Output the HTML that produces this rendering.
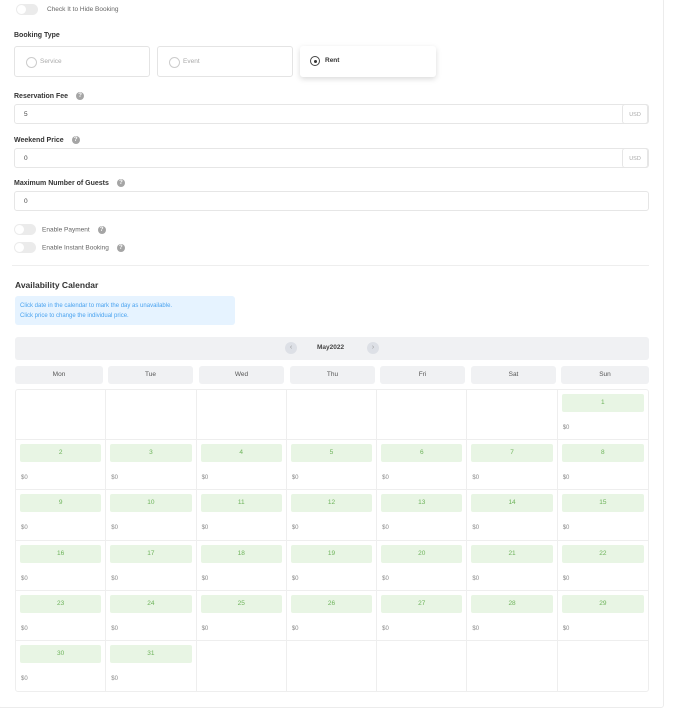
<!DOCTYPE html>
<html><head><meta charset="utf-8"><style>
*{box-sizing:border-box;margin:0;padding:0}
body{width:674px;height:713px;background:#fff;font-family:"Liberation Sans",sans-serif;position:relative;overflow:hidden;color:#333}
.wrap{position:absolute;left:-2px;top:-2px;width:666px;height:710px;border:1px solid #ececec;border-radius:3px}
.a{position:absolute}
.tg{width:22px;height:11px;border-radius:6px;background:#ebebeb}
.tg::after{content:"";position:absolute;left:1px;top:1px;width:9px;height:9px;border-radius:50%;background:#fff}
.lbl{font-size:7px;font-weight:bold;color:#333}
.sm{font-size:6.5px;color:#666}
.q{display:inline-block;width:8px;height:8px;border-radius:50%;background:#a5a5a5;color:#fff;font-size:6px;text-align:center;line-height:8px;font-weight:bold;vertical-align:middle;margin-left:8px}
.inp{border:1px solid #e6e6e6;border-radius:3px;height:20px;font-size:6.5px;padding-left:9px;line-height:19px;color:#444}
.usd{position:absolute;right:0;top:-1px;width:26px;height:20px;border:1px solid #e6e6e6;border-radius:3px;font-size:5.5px;color:#aaa;text-align:center;line-height:20px}
.bt{border:1px solid #e4e4e4;border-radius:3px;height:31px;font-size:6.5px;color:#aaa;line-height:29px;padding-left:25px}
.bt::before{content:"";position:absolute;left:11px;top:10px;width:9px;height:9px;border:1px solid #ccc;border-radius:50%}
.wd{position:absolute;top:366px;height:18px;background:#f0f1f3;border-radius:3px;font-size:6.5px;color:#555;text-align:center;line-height:18px}
.cal{position:absolute;left:15px;top:389px;width:634px;height:303px;border:1px solid #eee;border-radius:3px;display:grid;grid-template-columns:repeat(7,1fr);grid-template-rows:repeat(6,1fr)}
.c{border-right:1px solid #eee;border-bottom:1px solid #eee;position:relative}
.c:nth-child(7n){border-right:none}
.c:nth-child(n+36){border-bottom:none}
.d{position:absolute;left:4px;right:4px;top:4px;height:18px;background:#e8f5e4;border-radius:2px;color:#6db35a;font-size:6.5px;text-align:center;line-height:18px}
.p{position:absolute;left:5px;top:35px;font-size:6px;color:#888}
</style></head><body>
<div class="wrap"></div>
<div class="a tg" style="left:16px;top:4px"></div>
<div class="a sm" style="left:47px;top:6px">Check It to Hide Booking</div>
<div class="a lbl" style="left:14px;top:32px">Booking Type</div>
<div class="a bt" style="left:14px;top:46px;width:136px">Service</div>
<div class="a bt" style="left:157px;top:46px;width:136px">Event</div>
<div class="a" style="left:300px;top:46px;width:136px;height:31px;border-radius:3px;box-shadow:0 2px 6px rgba(0,0,0,.15);font-size:6.5px;font-weight:bold;line-height:30px;padding-left:25px;color:#333">Rent<span style="position:absolute;left:10px;top:10px;width:10px;height:10px;border:1px solid #444;border-radius:50%"></span><span style="position:absolute;left:13.5px;top:13.5px;width:3px;height:3px;background:#333;border-radius:50%"></span></div>
<div class="a lbl" style="left:14px;top:92px">Reservation Fee<span class="q">?</span></div>
<div class="a inp" style="left:14px;top:104px;width:635px">5<div class="usd">USD</div></div>
<div class="a lbl" style="left:14px;top:136px">Weekend Price<span class="q">?</span></div>
<div class="a inp" style="left:14px;top:148px;width:635px">0<div class="usd">USD</div></div>
<div class="a lbl" style="left:14px;top:179px">Maximum Number of Guests<span class="q">?</span></div>
<div class="a inp" style="left:14px;top:191px;width:635px">0</div>
<div class="a tg" style="left:14px;top:224px"></div>
<div class="a sm" style="left:42px;top:226px">Enable Payment<span class="q">?</span></div>
<div class="a tg" style="left:14px;top:242px"></div>
<div class="a sm" style="left:42px;top:244px">Enable Instant Booking<span class="q">?</span></div>
<div class="a" style="left:12px;top:265px;width:637px;height:1px;background:#eee"></div>
<div class="a" style="left:15px;top:280px;font-size:8.5px;font-weight:bold;color:#333">Availability Calendar</div>
<div class="a" style="left:15px;top:296px;width:220px;height:29px;background:#e6f3ff;border-radius:3px;font-size:6px;color:#4aa3f0;padding:5px 0 0 5px;line-height:10px">Click date in the calendar to mark the day as unavailable.<br>Click price to change the individual price.</div>
<div class="a" style="left:15px;top:337px;width:634px;height:23px;background:#f0f1f3;border-radius:3px"></div>
<div class="a" style="left:285px;top:342px;width:12px;height:12px;border-radius:50%;background:#dde0e6;font-size:7px;color:#999;text-align:center;line-height:12px">‹</div>
<div class="a" style="left:317px;top:344px;font-size:6.5px;font-weight:bold;color:#444">May2022</div>
<div class="a" style="left:367px;top:342px;width:12px;height:12px;border-radius:50%;background:#dde0e6;font-size:7px;color:#999;text-align:center;line-height:12px">›</div>
<div class="wd" style="left:15px;width:88px">Mon</div>
<div class="wd" style="left:108px;width:85px">Tue</div>
<div class="wd" style="left:199px;width:85px">Wed</div>
<div class="wd" style="left:290px;width:85px">Thu</div>
<div class="wd" style="left:380px;width:85px">Fri</div>
<div class="wd" style="left:471px;width:85px">Sat</div>
<div class="wd" style="left:561px;width:88px">Sun</div>
<div class="cal">
<div class="c"></div><div class="c"></div><div class="c"></div><div class="c"></div><div class="c"></div><div class="c"></div><div class="c"><div class="d">1</div><div class="p">$0</div></div>
<div class="c"><div class="d">2</div><div class="p">$0</div></div><div class="c"><div class="d">3</div><div class="p">$0</div></div><div class="c"><div class="d">4</div><div class="p">$0</div></div><div class="c"><div class="d">5</div><div class="p">$0</div></div><div class="c"><div class="d">6</div><div class="p">$0</div></div><div class="c"><div class="d">7</div><div class="p">$0</div></div><div class="c"><div class="d">8</div><div class="p">$0</div></div>
<div class="c"><div class="d">9</div><div class="p">$0</div></div><div class="c"><div class="d">10</div><div class="p">$0</div></div><div class="c"><div class="d">11</div><div class="p">$0</div></div><div class="c"><div class="d">12</div><div class="p">$0</div></div><div class="c"><div class="d">13</div><div class="p">$0</div></div><div class="c"><div class="d">14</div><div class="p">$0</div></div><div class="c"><div class="d">15</div><div class="p">$0</div></div>
<div class="c"><div class="d">16</div><div class="p">$0</div></div><div class="c"><div class="d">17</div><div class="p">$0</div></div><div class="c"><div class="d">18</div><div class="p">$0</div></div><div class="c"><div class="d">19</div><div class="p">$0</div></div><div class="c"><div class="d">20</div><div class="p">$0</div></div><div class="c"><div class="d">21</div><div class="p">$0</div></div><div class="c"><div class="d">22</div><div class="p">$0</div></div>
<div class="c"><div class="d">23</div><div class="p">$0</div></div><div class="c"><div class="d">24</div><div class="p">$0</div></div><div class="c"><div class="d">25</div><div class="p">$0</div></div><div class="c"><div class="d">26</div><div class="p">$0</div></div><div class="c"><div class="d">27</div><div class="p">$0</div></div><div class="c"><div class="d">28</div><div class="p">$0</div></div><div class="c"><div class="d">29</div><div class="p">$0</div></div>
<div class="c"><div class="d">30</div><div class="p">$0</div></div><div class="c"><div class="d">31</div><div class="p">$0</div></div><div class="c"></div><div class="c"></div><div class="c"></div><div class="c"></div><div class="c"></div>
</div>
</body></html>
